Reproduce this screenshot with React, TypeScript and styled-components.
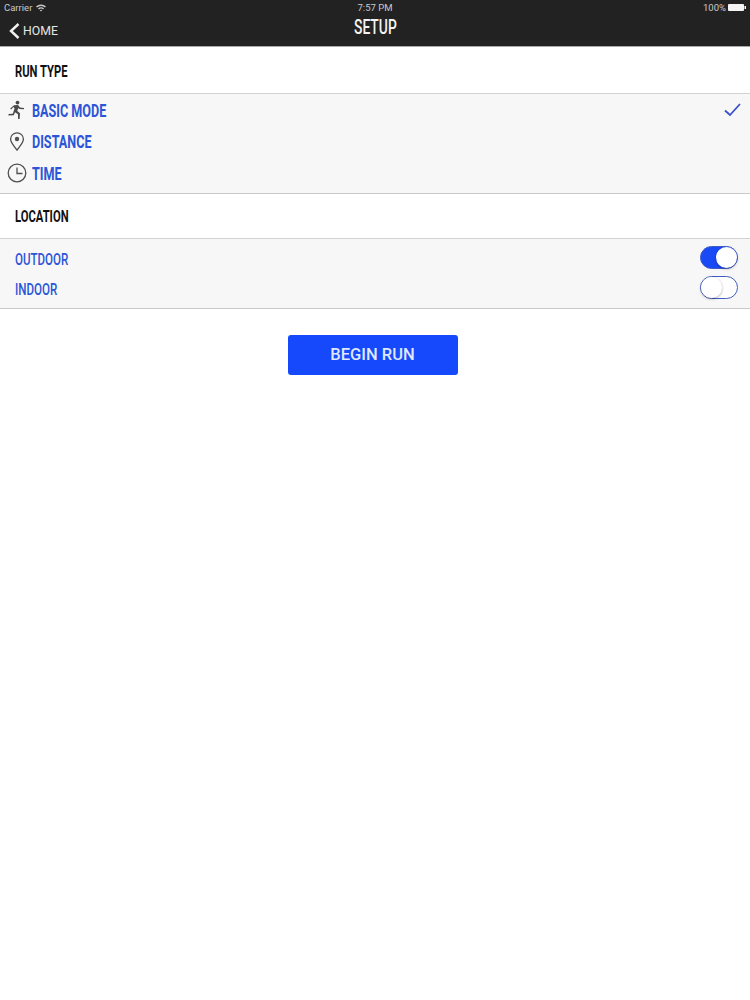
import React from 'react';
import styled, { createGlobalStyle } from 'styled-components';

const GlobalStyle = createGlobalStyle`
  html, body {
    margin: 0;
    padding: 0;
    background: #fff;
    font-family: "Roboto", "Liberation Sans", sans-serif;
  }
`;

const Page = styled.div`
  width: 750px;
  height: 1000px;
  overflow: hidden;
  background: #fff;
`;

const NavBar = styled.header`
  height: 46px;
  background: #232223;
  border-bottom: 1px solid #a9a9a9;
  display: grid;
  grid-template-rows: 15px 31px;
  color: #fff;
`;

const StatusRow = styled.div`
  display: grid;
  grid-template-columns: 1fr auto 1fr;
  align-items: center;
  padding: 0 4px;
  font-size: 9.5px;
  color: #c9c9c9;
`;

const StatusLeft = styled.div`
  display: flex;
  align-items: center;
  gap: 4px;
`;

const StatusRight = styled.div`
  display: flex;
  align-items: center;
  justify-content: flex-end;
  gap: 2px;
`;

const TitleRow = styled.div`
  display: grid;
  grid-template-columns: 1fr auto 1fr;
  align-items: center;
`;

const BackLink = styled.div`
  display: flex;
  align-items: center;
  gap: 3px;
  font-size: 12.3px;
  color: #e4e4e4;
  padding-left: 9px;
  padding-top: 1px;
`;

const NavTitle = styled.div`
  font-family: "Roboto", "Liberation Sans", sans-serif;
  font-size: 21px;
  font-weight: 500;
  color: #f2f2f2;
  padding-bottom: 7px;
  display: inline-block;
  transform: scaleX(0.66);
`;

const SectionHeader = styled.div<{ $height: number; $nudge: number }>`
  height: ${p => p.$height}px;
  padding: ${p => p.$nudge}px 0 0 15px;
  display: flex;
  align-items: center;
  background: #fff;
  border-bottom: 1px solid #d2d2d2;
  box-sizing: border-box;
`;

const SectionTitle = styled.span`
  font-family: "Roboto", "Liberation Sans", sans-serif;
  font-size: 17px;
  font-weight: 700;
  color: #111;
  display: inline-block;
  white-space: nowrap;
  transform: scaleX(0.66);
  transform-origin: left center;
`;

const List = styled.div<{ $height: number; $bottomGap: number }>`
  height: ${p => p.$height}px;
  background: #f7f7f8;
  border-bottom: 1px solid #c9c9c9;
  box-sizing: border-box;
  padding-bottom: ${p => p.$bottomGap}px;
  display: flex;
  flex-direction: column;
  justify-content: center;
`;

const Row = styled.div<{ $height: number }>`
  height: ${p => p.$height}px;
  display: flex;
  align-items: center;
  justify-content: space-between;
  padding: 0 12px 0 4px;
`;

const RowLabelGroup = styled.div`
  display: flex;
  align-items: center;
`;

const IconSlot = styled.span`
  width: 25px;
  margin-right: 3px;
  display: flex;
  justify-content: center;
  color: #555;
`;

const RowLabel = styled.span<{ $inset?: boolean }>`
  font-family: "Roboto", "Liberation Sans", sans-serif;
  font-size: ${p => (p.$inset ? 17 : 18)}px;
  font-weight: ${p => (p.$inset ? 500 : 700)};
  color: #2b55d6;
  margin-left: ${p => (p.$inset ? 11 : 0)}px;
  margin-top: ${p => (p.$inset ? 4 : 0)}px;
  display: inline-block;
  white-space: nowrap;
  transform: scaleX(${p => (p.$inset ? 0.68 : 0.7)});
  transform-origin: left center;
`;

const CheckSlot = styled.span`
  display: flex;
  margin-right: -3px;
`;

const SwitchTrack = styled.div<{ $on: boolean }>`
  width: 38px;
  height: 23px;
  box-sizing: border-box;
  border-radius: 12px;
  border: 1px solid #3f5cc4;
  background: ${p => (p.$on ? '#1a4af5' : '#fff')};
  display: flex;
  justify-content: ${p => (p.$on ? 'flex-end' : 'flex-start')};
`;

const SwitchKnob = styled.div`
  width: 21px;
  height: 21px;
  border-radius: 50%;
  background: #fff;
  box-shadow: 0 1px 3px rgba(0, 0, 0, 0.3);
`;

const ButtonRow = styled.div`
  display: flex;
  justify-content: center;
  padding: 26px 5px 0 0;
`;

const BeginButton = styled.button`
  width: 170px;
  height: 40px;
  border: 0;
  border-radius: 3px;
  background: #1549fb;
  color: #dfe8ff;
  font-family: "Roboto", "Liberation Sans", sans-serif;
  font-size: 16.5px;
  font-weight: 500;
  padding: 0 0 2px;
`;

const RunnerIcon = () => (
  <svg width="19" height="20" viewBox="0 0 19 20" fill="#4a4a4a">
    <circle cx="10.5" cy="2.6" r="1.9" />
    <path d="M7 5.2 L11 4.9 L13 7.6 L17 8 L17 9.2 L12.3 8.9 L11.2 7.9 L10.3 11 L13 13.2 L12.6 19 L11 19 L11 14.2 L8 12.3 L6.8 15.3 L1.5 15.4 L1.5 14 L5.8 13.8 L7.6 8.2 L6.3 7 L4.2 9.4 L3.2 8.6 Z" />
  </svg>
);

const PinIcon = () => (
  <svg width="16" height="19" viewBox="0 0 16 19" fill="none" stroke="#4f4f4f" strokeWidth="1.3">
    <path d="M8 18 C5 13.8 1.6 10.8 1.6 7 A6.4 6.2 0 0 1 14.4 7 C14.4 10.8 11 13.8 8 18 Z" />
    <circle cx="8" cy="7" r="2.2" fill="#4f4f4f" stroke="none" />
  </svg>
);

const ClockIcon = () => (
  <svg width="20" height="20" viewBox="0 0 20 20" fill="none" stroke="#4f4f4f" strokeWidth="1.3">
    <circle cx="10" cy="10" r="8.8" />
    <path d="M10 4.5 V10.5 H15.5" />
  </svg>
);

const CheckIcon = () => (
  <svg width="17" height="14" viewBox="0 0 17 14" fill="none" stroke="#3c50c8" strokeWidth="1.8">
    <path d="M1 7.5 L6 12 L16 1" />
  </svg>
);

const WifiIcon = () => (
  <svg width="10" height="8" viewBox="0 0 10 8" fill="#c9c9c9">
    <path d="M0 2.6 A7 7 0 0 1 10 2.6 L9 3.6 A5.6 5.6 0 0 0 1 3.6 Z M2 4.5 A4.2 4.2 0 0 1 8 4.5 L7 5.5 A2.8 2.8 0 0 0 3 5.5 Z M3.8 6.3 A1.7 1.7 0 0 1 6.2 6.3 L5 7.6 Z" />
  </svg>
);

const BatteryIcon = () => (
  <svg width="18" height="7" viewBox="0 0 18 7" fill="#f4f4f4">
    <rect x="0" y="0" width="16" height="7" rx="1" />
    <rect x="16.5" y="2" width="1.5" height="3" />
  </svg>
);

const BackChevron = () => (
  <svg width="11" height="16" viewBox="0 0 11 16" fill="none" stroke="#f2f2f2" strokeWidth="2.4">
    <path d="M9.5 1 L2 8 L9.5 15" />
  </svg>
);

const runTypes = [
  { label: 'BASIC MODE', icon: <RunnerIcon />, height: 32, checked: true },
  { label: 'DISTANCE', icon: <PinIcon />, height: 31 },
  { label: 'TIME', icon: <ClockIcon />, height: 32 },
];

const locations = [
  { label: 'OUTDOOR', on: true },
  { label: 'INDOOR', on: false },
];

export default function App() {
  return (
    <Page>
      <GlobalStyle />
      <NavBar>
        <StatusRow>
          <StatusLeft>
            Carrier <WifiIcon />
          </StatusLeft>
          <span>7:57 PM</span>
          <StatusRight>
            100% <BatteryIcon />
          </StatusRight>
        </StatusRow>
        <TitleRow>
          <BackLink>
            <BackChevron /> HOME
          </BackLink>
          <NavTitle>SETUP</NavTitle>
          <span />
        </TitleRow>
      </NavBar>

      <SectionHeader $height={47} $nudge={1}>
        <SectionTitle>RUN TYPE</SectionTitle>
      </SectionHeader>
      <List $height={100} $bottomGap={4}>
        {runTypes.map(item => (
          <Row key={item.label} $height={item.height}>
            <RowLabelGroup>
              <IconSlot>{item.icon}</IconSlot>
              <RowLabel>{item.label}</RowLabel>
            </RowLabelGroup>
            {item.checked && (
              <CheckSlot>
                <CheckIcon />
              </CheckSlot>
            )}
          </Row>
        ))}
      </List>

      <SectionHeader $height={45} $nudge={0}>
        <SectionTitle>LOCATION</SectionTitle>
      </SectionHeader>
      <List $height={70} $bottomGap={3}>
        {locations.map(item => (
          <Row key={item.label} $height={30}>
            <RowLabel $inset>{item.label}</RowLabel>
            <SwitchTrack $on={item.on}>
              <SwitchKnob />
            </SwitchTrack>
          </Row>
        ))}
      </List>

      <ButtonRow>
        <BeginButton>BEGIN RUN</BeginButton>
      </ButtonRow>
    </Page>
  );
}
